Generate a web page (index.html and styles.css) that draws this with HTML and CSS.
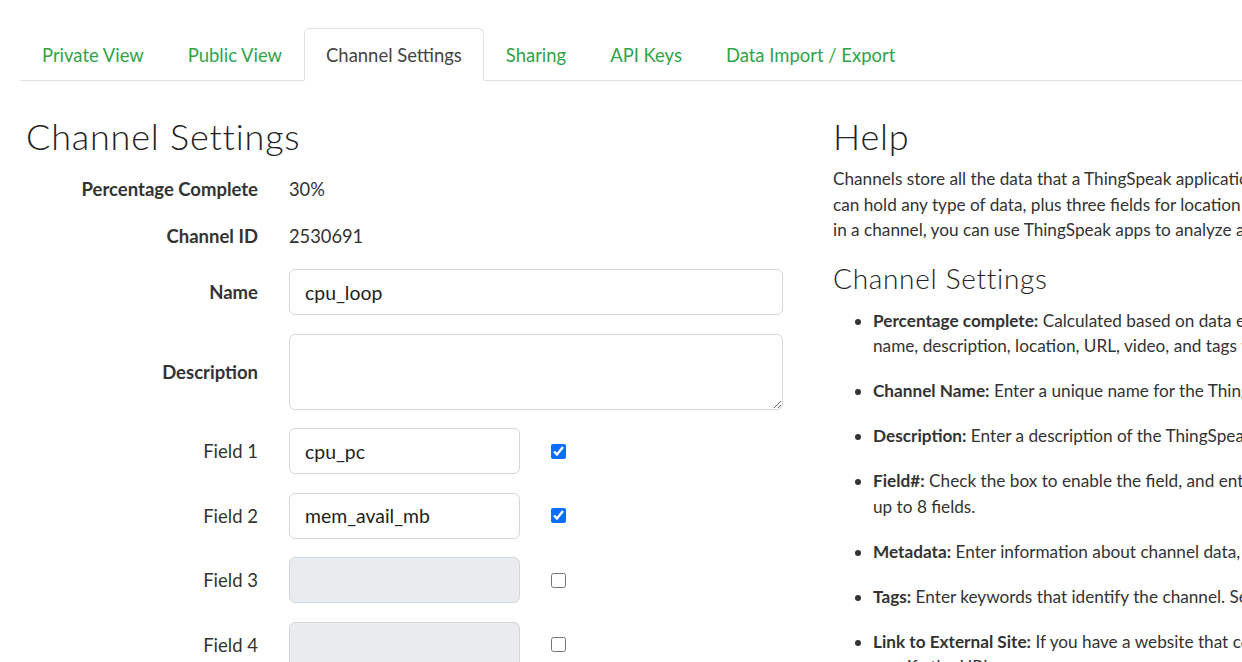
FILE: index.html
```html
<!DOCTYPE html>
<html lang="en">
<head>
<meta charset="utf-8">
<title>Channel Settings</title>
<link rel="stylesheet" href="styles.css">
</head>
<body>
<div class="page">
  <ul class="tabs">
    <li class="tab"><a href="#">Private View</a></li>
    <li class="tab"><a href="#">Public View</a></li>
    <li class="tab active"><a href="#">Channel Settings</a></li>
    <li class="tab"><a href="#">Sharing</a></li>
    <li class="tab"><a href="#">API Keys</a></li>
    <li class="tab"><a href="#">Data Import / Export</a></li>
  </ul>
  <div class="content">
    <div class="left">
      <h2 class="title">Channel Settings</h2>
      <div class="form">
        <div class="row info">
          <label class="lbl bold">Percentage Complete</label>
          <div class="val">30%</div>
        </div>
        <div class="row info">
          <label class="lbl bold">Channel ID</label>
          <div class="val">2530691</div>
        </div>
        <div class="row">
          <label class="lbl bold">Name</label>
          <input class="input wide" type="text" value="cpu_loop">
        </div>
        <div class="row">
          <label class="lbl bold">Description</label>
          <textarea class="input wide area"></textarea>
        </div>
        <div class="row">
          <label class="lbl">Field 1</label>
          <input class="input short" type="text" value="cpu_pc">
          <input class="check" type="checkbox" checked>
        </div>
        <div class="row">
          <label class="lbl">Field 2</label>
          <input class="input short" type="text" value="mem_avail_mb">
          <input class="check" type="checkbox" checked>
        </div>
        <div class="row">
          <label class="lbl">Field 3</label>
          <input class="input short" type="text" disabled>
          <input class="check" type="checkbox">
        </div>
        <div class="row">
          <label class="lbl">Field 4</label>
          <input class="input short" type="text" disabled>
          <input class="check" type="checkbox">
        </div>
      </div>
    </div>
    <div class="right">
      <h2 class="title">Help</h2>
      <p class="intro">Channels store all the data that a ThingSpeak application collects. Each channel includes eight fields that<br>can hold any type of data, plus three fields for location data and one for status data. Once you collect data<br>in a channel, you can use ThingSpeak apps to analyze and visualize it.</p>
      <h3 class="subtitle">Channel Settings</h3>
      <ul class="help-list">
        <li><b>Percentage complete:</b> Calculated based on data entered into the various fields of a channel. Enter the<br>name, description, location, URL, video, and tags to complete your channel.</li>
        <li><b>Channel Name:</b> Enter a unique name for the ThingSpeak channel.</li>
        <li><b>Description:</b> Enter a description of the ThingSpeak channel.</li>
        <li><b>Field#:</b> Check the box to enable the field, and enter a field name. Each ThingSpeak channel can have<br>up to 8 fields.</li>
        <li><b>Metadata:</b> Enter information about channel data, including JSON, XML, or CSV data.</li>
        <li><b>Tags:</b> Enter keywords that identify the channel. Separate tags with commas.</li>
        <li><b>Link to External Site:</b> If you have a website that contains information about your ThingSpeak channel,<br>specify the URL.</li>
      </ul>
    </div>
  </div>
</div>
</body>
</html>
```

FILE: styles.css
```css
html, body {
  margin: 0;
  padding: 0;
  background: #fff;
  overflow: hidden;
}
body {
  font-family: Lato, "Liberation Sans", sans-serif;
  color: #333;
  font-size: 17px;
}
.page {
  width: 1700px;
  padding: 28px 0 0 20px;
}
.tabs {
  list-style: none;
  margin: 0;
  padding: 0;
  display: flex;
  border-bottom: 1px solid #dee2e6;
}
.tab {
  margin-bottom: -1px;
}
.tab a {
  display: block;
  padding: 0 21px;
  height: 51px;
  line-height: 53px;
  font-size: 18.45px;
  color: #2fa44a;
  text-decoration: none;
  border: 1px solid transparent;
  border-radius: 6px 6px 0 0;
}
.tab.active a {
  color: #444;
  background: #fff;
  border-color: #dee2e6 #dee2e6 #fff;
}
.content {
  display: flex;
  gap: 15px;
  padding-top: 36px;
}
.left {
  width: 792px;
  padding-left: 6px;
  flex: none;
}
.right {
  flex: 1;
}
.title {
  font-family: Lato, sans-serif;
  font-weight: 300;
  font-size: 36px;
  letter-spacing: 0.8px;
  color: #222;
  margin: 0;
  line-height: 38px;
}
.form {
  padding-top: 20px;
  display: flex;
  flex-direction: column;
  gap: 18.5px;
}
.row {
  display: flex;
  align-items: center;
  gap: 31px;
}
.row.info {
  height: 28.5px;
}
.lbl {
  width: 232px;
  flex: none;
  text-align: right;
  font-size: 18.5px;
  color: #333;
}
.lbl.bold {
  font-weight: 700;
}
.val {
  font-size: 18.3px;
  color: #333;
}
.input {
  box-sizing: border-box;
  height: 46px;
  border: 1px solid #d3d6da;
  border-radius: 6px;
  padding: 0 15px;
  font-family: Lato, sans-serif;
  font-size: 19.4px;
  color: #222;
  background: #fff;
  margin: 0;
}
.input.wide {
  width: 494px;
}
.input.area {
  height: 76px;
  resize: vertical;
}
.input.short {
  width: 231px;
}
.input:disabled {
  background: #e9ecef;
}
.check {
  width: 15px;
  height: 15px;
  margin: 0;
  accent-color: #0d6efd;
}
.intro {
  margin: 11px 0 0;
  line-height: 25.5px;
  font-size: 17.2px;
  white-space: nowrap;
}
.subtitle {
  font-family: Lato, sans-serif;
  font-weight: 300;
  font-size: 28px;
  letter-spacing: 0.7px;
  color: #222;
  margin: 17px 0 0;
  line-height: 36px;
}
.help-list {
  margin: 12px 0 0;
  padding-left: 40px;
  line-height: 25.5px;
  font-size: 17.2px;
  white-space: nowrap;
}
.help-list li {
  margin-bottom: 19.5px;
}
.help-list b {
  font-weight: 700;
}
```
